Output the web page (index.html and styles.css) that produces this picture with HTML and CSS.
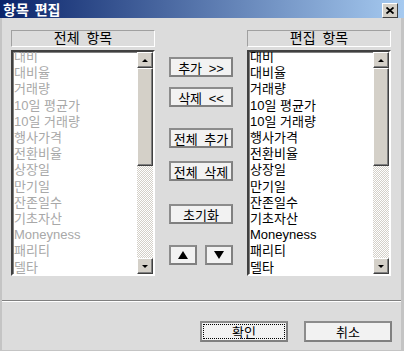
FILE: index.html
```html
<!DOCTYPE html>
<html lang="ko">
<head>
    <meta charset="UTF-8">
    <meta name="viewport" content="width=device-width, initial-scale=1.0">
    <title>항목 편집</title>
    <link rel="stylesheet" href="styles.css">
</head>
<body>

<div class="window">
    <div class="titlebar">
        <span class="title">항목 편집</span>
        <span class="close">
            <svg width="8" height="7" viewBox="0 0 8 7"><path d="M0.5 0.5 L7.5 6.5 M7.5 0.5 L0.5 6.5" stroke="#000" stroke-width="1.8"/></svg>
        </span>
    </div>

    <div class="panes">
        <div class="pane">
            <div class="pane-head">전체 항목</div>
            <div class="listbox">
                <ul class="items muted">
                    <li>대비</li>
                    <li>대비율</li>
                    <li>거래량</li>
                    <li>10일 평균가</li>
                    <li>10일 거래량</li>
                    <li>행사가격</li>
                    <li>전환비율</li>
                    <li>상장일</li>
                    <li>만기일</li>
                    <li>잔존일수</li>
                    <li>기초자산</li>
                    <li>Moneyness</li>
                    <li>패리티</li>
                    <li>델타</li>
                </ul>
                <div class="scrollbar">
                    <div class="sb-btn"><span class="tri-up"></span></div>
                    <div class="sb-thumb"></div>
                    <div class="sb-track"></div>
                    <div class="sb-btn"><span class="tri-down"></span></div>
                </div>
            </div>
        </div>

        <div class="actions">
            <button class="btn">추가 &gt;&gt;</button>
            <button class="btn gap-s">삭제 &lt;&lt;</button>
            <button class="btn gap-l">전체 추가</button>
            <button class="btn gap-m">전체 삭제</button>
            <button class="btn gap-xl">초기화</button>
            <div class="arrows gap-l">
                <button class="btn small"><span class="tri-up big"></span></button>
                <button class="btn small"><span class="tri-down big"></span></button>
            </div>
        </div>

        <div class="pane">
            <div class="pane-head">편집 항목</div>
            <div class="listbox">
                <ul class="items">
                    <li>대비</li>
                    <li>대비율</li>
                    <li>거래량</li>
                    <li>10일 평균가</li>
                    <li>10일 거래량</li>
                    <li>행사가격</li>
                    <li>전환비율</li>
                    <li>상장일</li>
                    <li>만기일</li>
                    <li>잔존일수</li>
                    <li>기초자산</li>
                    <li>Moneyness</li>
                    <li>패리티</li>
                    <li>델타</li>
                </ul>
                <div class="scrollbar">
                    <div class="sb-btn"><span class="tri-up"></span></div>
                    <div class="sb-thumb"></div>
                    <div class="sb-track"></div>
                    <div class="sb-btn"><span class="tri-down"></span></div>
                </div>
            </div>
        </div>
    </div>

    <div class="separator"></div>

    <div class="footer">
        <button class="btn wide"><span class="focus">확인</span></button>
        <button class="btn wide">취소</button>
    </div>
</div>

</body>
</html>
```

FILE: styles.css
```css
body {
    margin: 0;
    background: #ffffff;
    font-family: "Liberation Sans", "Noto Sans CJK KR", sans-serif;
    font-size: 13px;
    color: #000;
}
.window {
    width: 404px;
    height: 351px;
    box-sizing: border-box;
    background: #dcdcdc;
    border-left: 2px solid #c4c4c4;
    border-right: 3px solid #c4c4c4;
    border-bottom: 1px solid #c4c4c4;
}
.titlebar {
    height: 18px;
    margin-left: -2px;
    margin-right: -3px;
    padding: 0 6px 0 3px;
    display: flex;
    align-items: center;
    justify-content: space-between;
    background: linear-gradient(to right, #0a246a, #a6caf0);
}
.title {
    color: #fff;
    font-weight: 700;
    font-size: 14px;
    word-spacing: 2px;
}
.close {
    width: 14px;
    height: 13px;
    margin-top: 2px;
    display: flex;
    align-items: center;
    justify-content: center;
    background: #d4d0c8;
    border-top: 1px solid #fff;
    border-left: 1px solid #fff;
    border-right: 1px solid #404040;
    border-bottom: 1px solid #404040;
}
.panes {
    display: flex;
    gap: 14px;
    padding: 12px 0 0 9px;
}
.pane {
    width: 144px;
    display: flex;
    flex-direction: column;
    gap: 3px;
}
.pane-head {
    height: 17px;
    box-sizing: border-box;
    line-height: 15px;
    text-align: center;
    font-size: 14px;
    word-spacing: 3px;
    border-top: 1px solid #a0a0a0;
    border-left: 1px solid #a0a0a0;
    border-right: 1px solid #fff;
    border-bottom: 1px solid #fff;
}
.listbox {
    height: 226px;
    box-sizing: border-box;
    display: flex;
    background: #fff;
    border-top: 2px solid #404040;
    border-left: 2px solid #404040;
    border-right: 2px solid #fff;
    border-bottom: 2px solid #fff;
    box-shadow: inset 1px 1px 0 #808080;
    overflow: hidden;
}
.items {
    flex: 1;
    list-style: none;
    margin: -3px 0 0 0;
    padding: 0 0 0 1px;
    line-height: 16.2px;
    white-space: nowrap;
    overflow: hidden;
}
.items.muted {
    color: #a8a8a8;
}
.scrollbar {
    width: 16px;
    display: flex;
    flex-direction: column;
}
.sb-btn {
    height: 16px;
    box-sizing: border-box;
    display: flex;
    align-items: center;
    justify-content: center;
    background: #d4d0c8;
    border-top: 1px solid #fff;
    border-left: 1px solid #fff;
    border-right: 1px solid #404040;
    border-bottom: 1px solid #404040;
    box-shadow: inset -1px -1px 0 #808080;
}
.sb-thumb {
    height: 98px;
    box-sizing: border-box;
    background: #d4d0c8;
    border-top: 1px solid #fff;
    border-left: 1px solid #fff;
    border-right: 1px solid #404040;
    border-bottom: 1px solid #404040;
    box-shadow: inset -1px -1px 0 #808080;
}
.sb-track {
    flex: 1;
    background: repeating-conic-gradient(#ffffff 0 25%, #d4d0c8 0 50%) 0 0 / 2px 2px;
}
.tri-up {
    width: 0;
    height: 0;
    border-left: 3px solid transparent;
    border-right: 3px solid transparent;
    border-bottom: 3px solid #000;
}
.tri-down {
    width: 0;
    height: 0;
    border-left: 3px solid transparent;
    border-right: 3px solid transparent;
    border-top: 3px solid #000;
}
.tri-up.big {
    border-left-width: 5px;
    border-right-width: 5px;
    border-bottom-width: 8px;
}
.tri-down.big {
    border-left-width: 5px;
    border-right-width: 5px;
    border-top-width: 8px;
}
.actions {
    width: 64px;
    display: flex;
    flex-direction: column;
    padding-top: 27px;
}
.btn {
    height: 20px;
    padding: 0;
    box-sizing: border-box;
    display: flex;
    align-items: center;
    justify-content: center;
    font-family: "Liberation Sans", "Noto Sans CJK KR", sans-serif;
    font-size: 13px;
    word-spacing: 3px;
    color: #000;
    background: #f2f2f2;
    border: 2px solid #808080;
    border-top-color: #8c8c8c;
    border-left-color: #8c8c8c;
}
.gap-s { margin-top: 10px; }
.gap-m { margin-top: 13px; }
.gap-l { margin-top: 21px; }
.gap-xl { margin-top: 23px; }
.arrows {
    display: flex;
    justify-content: space-between;
}
.btn.small {
    width: 28px;
}
.separator {
    margin: 24px 0 0 0;
    height: 1px;
    background: #808080;
    border-bottom: 1px solid #fff;
}
.footer {
    display: flex;
    justify-content: flex-end;
    gap: 16px;
    padding: 19px 9px 0 0;
}
.btn.wide {
    width: 88px;
    height: 21px;
}
.focus {
    width: 80px;
    height: 13px;
    display: flex;
    align-items: center;
    justify-content: center;
    border: 1px dotted #000;
}
```
